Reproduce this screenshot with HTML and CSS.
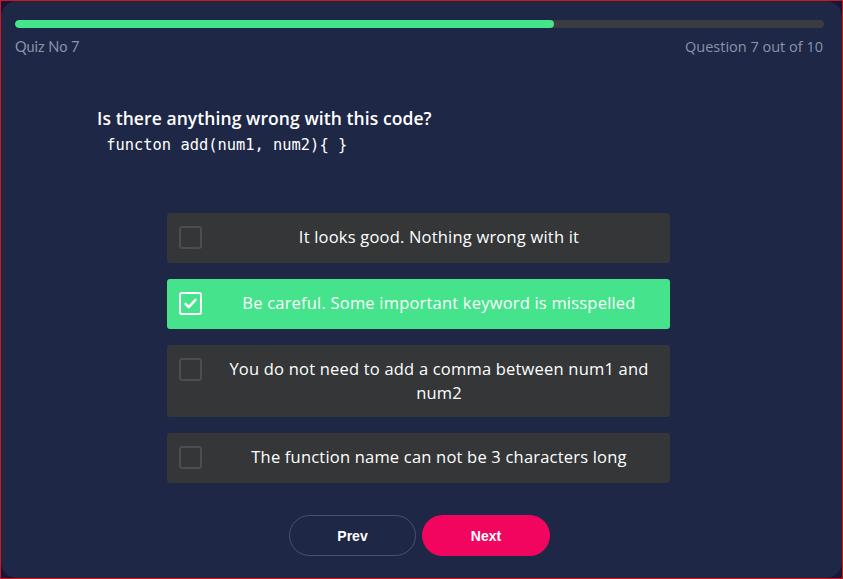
FILE: index.html
```html
<!DOCTYPE html>
<html lang="en">
<head>
<meta charset="utf-8">
<title>Quiz</title>
<link rel="stylesheet" href="styles.css">
</head>
<body>
<div class="frame">
  <main class="card">
    <div class="progress"><div class="progress-fill" style="width: 66.6%"></div></div>
    <div class="meta">
      <span class="quiz-no">Quiz No 7</span>
      <span class="count">Question 7 out of 10</span>
    </div>
    <section class="question">
      <h1 class="q-title">Is there anything wrong with this code?</h1>
      <pre class="q-code"> functon add(num1, num2){ }</pre>
    </section>
    <ul class="options">
      <li class="option"><span class="box"></span><span class="opt-text">It looks good. Nothing wrong with it</span></li>
      <li class="option selected"><span class="box"><svg viewBox="0 0 24 24" width="17" height="17"><path d="M5 12.5l4.5 4.5L19 7" fill="none" stroke="#fff" stroke-width="3.6" stroke-linecap="round" stroke-linejoin="round"/></svg></span><span class="opt-text">Be careful. Some important keyword is misspelled</span></li>
      <li class="option"><span class="box"></span><span class="opt-text">You do not need to add a comma between num1 and num2</span></li>
      <li class="option"><span class="box"></span><span class="opt-text">The function name can not be 3 characters long</span></li>
    </ul>
    <div class="nav">
      <button class="btn prev">Prev</button>
      <button class="btn next">Next</button>
    </div>
  </main>
</div>
</body>
</html>
```
FILE: styles.css
```css
* { box-sizing: border-box; }
html, body { margin: 0; padding: 0; }
body {
  width: 843px;
  height: 579px;
  background: #d01818;
  font-family: "Open Sans", sans-serif;
}
.frame {
  width: 843px;
  height: 579px;
  border: 1px solid #d01818;
  background: #17163a;
}
.card {
  height: 100%;
  background: #1e2745;
  border-radius: 16px;
  padding: 19px 18px 0 14px;
}
.progress {
  height: 8px;
  background: #393c41;
  border-radius: 4px;
  overflow: hidden;
}
.progress-fill {
  height: 100%;
  background: #45e58b;
  border-radius: 4px;
}
.meta {
  display: flex;
  justify-content: space-between;
  margin-top: 9px;
  line-height: 20px;
  font-size: 14.5px;
  color: #8a93ab;
}
.quiz-no { font-family: "Lato", sans-serif; font-size: 14.5px; }
.count { font-family: "Open Sans", sans-serif; margin-right: 1px; }
.question {
  margin: 49px 0 0 82px;
}
.q-title {
  margin: 0;
  font-size: 17.5px;
  line-height: 24px;
  font-weight: 600;
  letter-spacing: 0.08px;
  color: #ffffff;
}
.q-code {
  margin: 4px 0 0;
  font-family: "DejaVu Sans Mono", monospace;
  font-size: 15.4px;
  line-height: 22px;
  color: #ffffff;
}
.options {
  list-style: none;
  margin: 57px 0 0 152px;
  padding: 0;
  width: 503px;
  display: flex;
  flex-direction: column;
  gap: 16px;
}
.option {
  display: flex;
  align-items: flex-start;
  min-height: 50px;
  padding: 12px 12px 12px;
  background: #343638;
  border-radius: 3px;
  color: #ffffff;
}
.option.selected { background: #45e38b; }
.box {
  flex: none;
  width: 23px;
  height: 23px;
  margin-top: 1px;
  border: 2px solid #4b4d50;
  border-radius: 3px;
  display: flex;
  align-items: center;
  justify-content: center;
}
.selected .box { border-color: #ffffff; border-width: 2.5px; }
.opt-text {
  flex: 1;
  padding: 0 0 0 18px;
  text-align: center;
  font-size: 16.5px;
  letter-spacing: 0.2px;
  line-height: 24px;
}
.nav {
  display: flex;
  justify-content: center;
  gap: 6px;
  margin-top: 32px;
}
.btn {
  width: 127px;
  height: 41px;
  border-radius: 21px;
  font-family: "Liberation Sans", Arial, sans-serif;
  font-size: 14px;
  font-weight: 700;
  color: #ffffff;
  cursor: pointer;
}
.prev {
  background: transparent;
  border: 1px solid #495270;
}
.next {
  width: 128px;
  background: #f1055f;
  border: none;
}
```
